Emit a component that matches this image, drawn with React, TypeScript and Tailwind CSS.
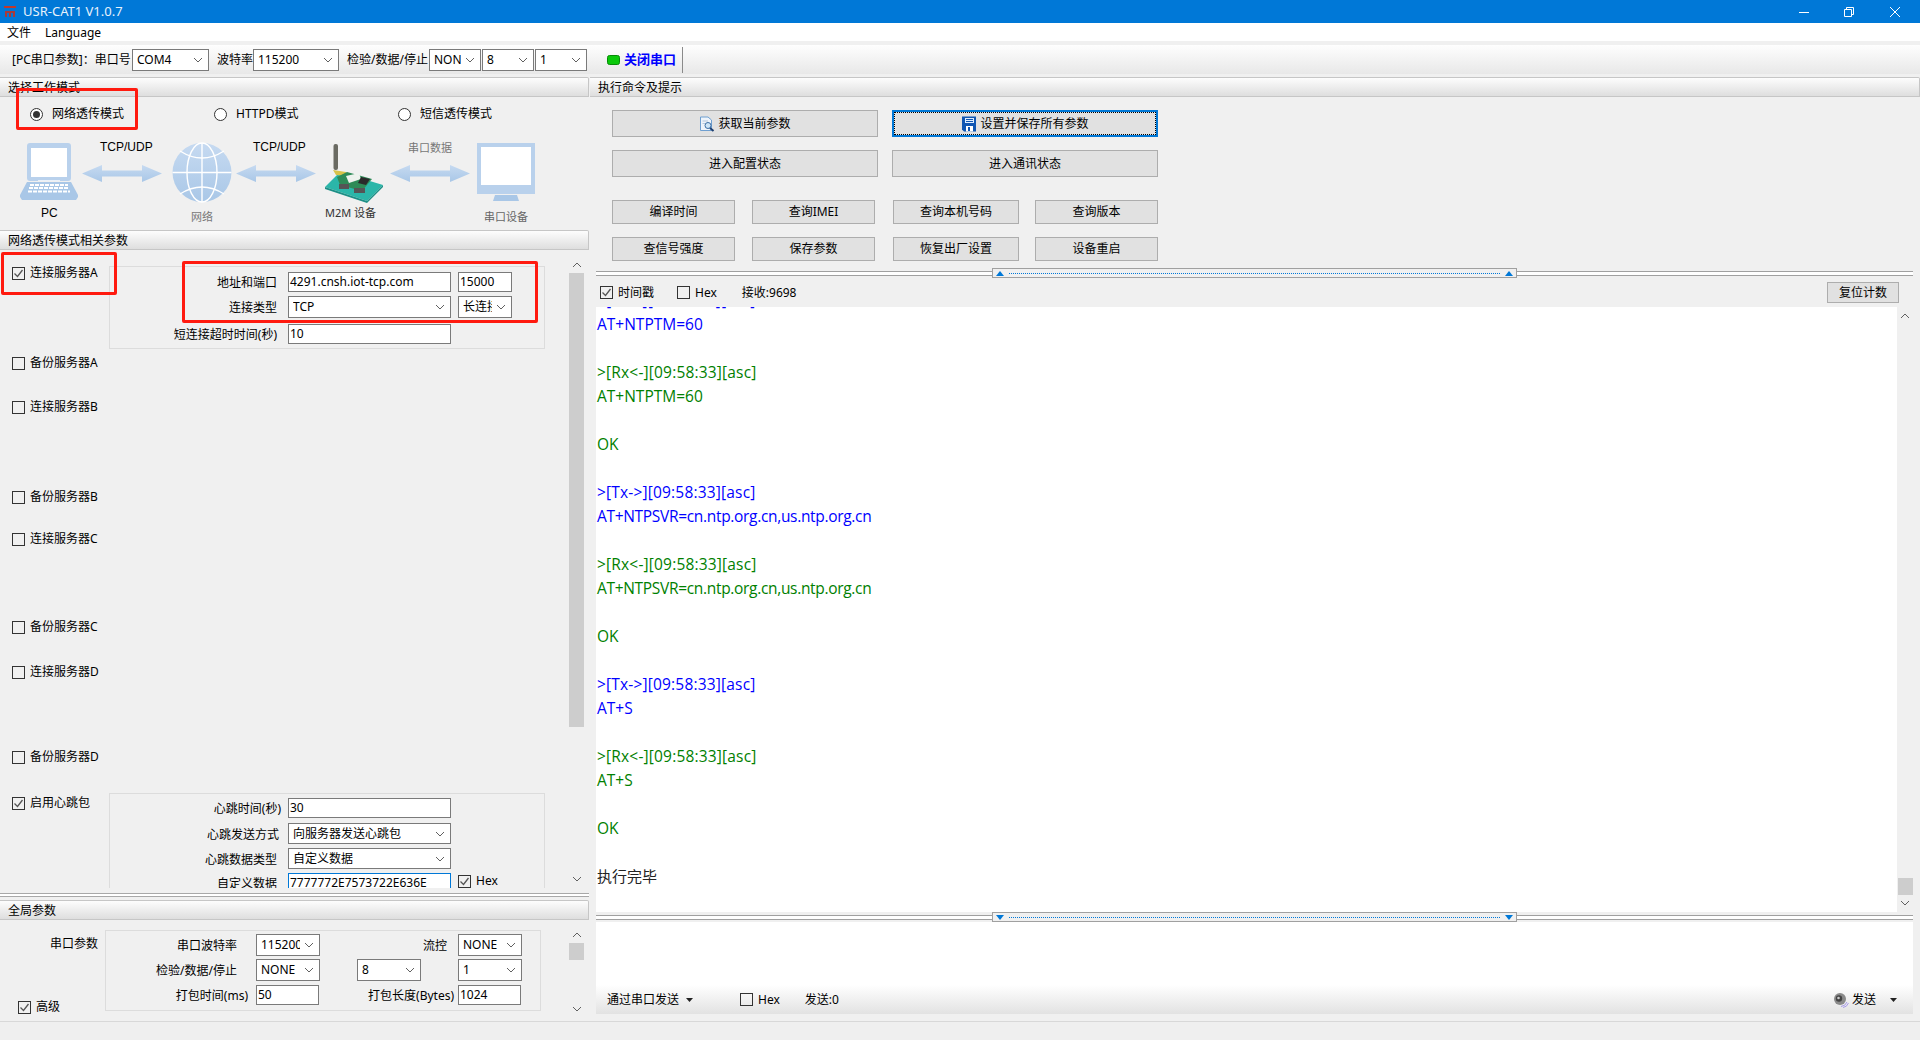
import React from "react";

const FONT = 'font-["Noto_Sans","Noto_Sans_CJK_SC",sans-serif]';

function Chevron({ up = false, className = "" }: { up?: boolean; className?: string }) {
  return (
    <svg width="10" height="6" viewBox="0 0 10 6" className={className}>
      <path d={up ? "M1 5 L5 1 L9 5" : "M1 1 L5 5 L9 1"} fill="none" stroke="#606060" strokeWidth="1" />
    </svg>
  );
}

function Sel({ w, h, children }: { w: string; h: string; children: React.ReactNode }) {
  return (
    <div className={`${w} ${h} shrink-0 flex items-center border border-[#7a7a7a] bg-white pl-[4px] pr-[5px] text-[12px] text-black`}>
      <span className="flex-1 overflow-hidden whitespace-nowrap">{children}</span>
      <Chevron className="ml-[4px] shrink-0" />
    </div>
  );
}

function Inp({ w, h, children, focus = false }: { w: string; h: string; children: React.ReactNode; focus?: boolean }) {
  return (
    <div className={`${w} ${h} shrink-0 flex items-center border ${focus ? "border-[#0078d7]" : "border-[#7a7a7a]"} bg-white pl-[1px] text-[12px] text-black whitespace-nowrap overflow-hidden`}>
      {children}
    </div>
  );
}

function Cb({ label, checked = false, className = "" }: { label?: string; checked?: boolean; className?: string }) {
  return (
    <div className={`flex items-center h-[14px] text-[12px] text-black whitespace-nowrap ${className}`}>
      <span className="w-[13px] h-[13px] shrink-0 border border-[#333] bg-transparent flex items-center justify-center">
        {checked && (
          <svg width="11" height="11" viewBox="0 0 11 11">
            <path d="M1.5 5.5 L4.5 8.5 L9.5 2" fill="none" stroke="#555" strokeWidth="1.3" />
          </svg>
        )}
      </span>
      {label && <span className="ml-[5px]">{label}</span>}
    </div>
  );
}

function SectionHead({ children }: { children: React.ReactNode }) {
  return (
    <div className="h-[20px] shrink-0 flex items-center pl-[8px] pt-[1px] text-[12px] text-black border-y border-r border-[#c6c6c6] rounded-tr-[2px] bg-gradient-to-b from-[#fdfdfd] to-[#dedede]">
      {children}
    </div>
  );
}

function Btn({ w, h, children, focus = false }: { w: string; h: string; children: React.ReactNode; focus?: boolean }) {
  return (
    <div className={`${w} ${h} shrink-0 flex items-center justify-center text-[12px] text-black bg-[#e1e1e1] ${focus ? "border-2 border-[#0078d7]" : "border border-[#adadad]"}`}>
      {focus ? (
        <div className="w-full h-full border border-dotted border-black flex items-center justify-center">{children}</div>
      ) : (
        children
      )}
    </div>
  );
}

function Lab({ w, children }: { w: string; children: React.ReactNode }) {
  return <div className={`${w} shrink-0 text-right text-[12px] text-black whitespace-nowrap pt-[2px]`}>{children}</div>;
}

function Split({ down = false }: { down?: boolean }) {
  const lines = (
    <div className="flex-1 h-[5px] border-y border-[#a0a0a0] bg-white" />
  );
  const tri = (
    <svg width="8" height="5" viewBox="0 0 8 5" className="shrink-0">
      <path d={down ? "M0 0 H8 L4 5 Z" : "M0 5 H8 L4 0 Z"} fill="#0078d7" />
    </svg>
  );
  return (
    <div className="h-[10px] shrink-0 flex items-center">
      {lines}
      <div className="w-[525px] h-[10px] shrink-0 flex items-center border border-[#a0a0a0] bg-[#f0f0f0] px-[3px] gap-[5px]">
        {tri}
        <div className="flex-1 border-t border-dotted border-[#0078d7]" />
        {tri}
      </div>
      {lines}
    </div>
  );
}

function Arrow({ x }: { x: number }) {
  const y = 38.5;
  const p = `${x},${y} ${x + 20},${y - 8.5} ${x + 20},${y - 3} ${x + 60},${y - 3} ${x + 60},${y - 8.5} ${x + 80},${y} ${x + 60},${y + 8.5} ${x + 60},${y + 3} ${x + 20},${y + 3} ${x + 20},${y + 8.5}`;
  return <polygon points={p} fill="url(#dg)" />;
}

function Diagram() {
  return (
    <svg width="590" height="95" viewBox="0 0 590 95" className="block">
      <defs>
        <linearGradient id="dg" x1="0" y1="0" x2="0" y2="1">
          <stop offset="0" stopColor="#c6daf1" />
          <stop offset="1" stopColor="#a9c7e7" />
        </linearGradient>
      </defs>
      {/* laptop */}
      <rect x="27" y="8" width="44" height="38" rx="3" fill="#b9d1ec" />
      <rect x="31" y="13" width="36" height="29" fill="#ffffff" />
      <path d="M27 47 H71 L78 60 V62 L76 65 H22 L20 62 V60 Z" fill="#a9c7e7" />
      <path d="M30 50 H68 M29 53 H69 M28 56.5 H70" stroke="#fff" strokeWidth="2" strokeDasharray="4 1" />
      <path d="M38 45.5 H60" stroke="#fff" strokeWidth="0.7" />
      <Arrow x={82} />
      {/* globe */}
      <circle cx="202" cy="37.5" r="29.5" fill="url(#dg)" />
      <g fill="none" stroke="#fff" strokeWidth="1.4">
        <ellipse cx="202" cy="37.5" rx="15" ry="29.5" />
        <path d="M202 8 V67 M172.5 37.5 H231.5" />
        <path d="M180 16 Q202 30 224 16" />
        <path d="M180 59 Q202 45 224 59" />
      </g>
      <Arrow x={236} />
      {/* module */}
      <polygon points="325,52 340,37 383,50 367,66" fill="#2bb6a9" />
      <polygon points="325,52 367,66 367,68 325,54" fill="#1d8f86" />
      <polygon points="367,66 383,50 383,52 367,68" fill="#1d8f86" />
      <rect x="333.5" y="9" width="4.5" height="26" rx="2" fill="#6a6a62" />
      <polygon points="333,35 346,37 348,41 336,40" fill="#d7c24a" />
      <polygon points="337,42 347,37 372,44 362,56 340,50" fill="#2e8b57" />
      <polygon points="346,41 359,38 361,44 349,48" fill="#eef2ee" />
      <polygon points="361,42 370,44 366,50 358,48" fill="#2a2a2a" />
      <rect x="339" y="49" width="10" height="5" fill="#555" />
      <rect x="354" y="53" width="11" height="5" fill="#555" />
      <Arrow x={390} />
      {/* monitor */}
      <rect x="477" y="8" width="58" height="51" fill="#b9d1ec" />
      <rect x="481" y="12" width="50" height="38" fill="#ffffff" />
      <polygon points="495,60 517,60 519,66 493,66" fill="#a9c7e7" />
    </svg>
  );
}

function DiagLabel({ pos, children }: { pos: string; children: React.ReactNode }) {
  return <span className={`absolute ${pos} text-[12px] leading-[14px] whitespace-nowrap`}>{children}</span>;
}

function ScrollBar({ top, thumb, bottom }: { top: string; thumb: string; bottom: string }) {
  return (
    <div className="w-[15px] shrink-0 flex flex-col items-center self-stretch">
      <Chevron up className={top} />
      <div className={thumb} />
      <div className="flex-1" />
      <Chevron className={bottom} />
    </div>
  );
}

const TX = "text-[#0000ff]";
const RX = "text-[#008000]";
const TXH = "text-[#0000ff] tracking-[0.18px]";
const RXH = "text-[#008000] tracking-[0.18px]";
const TXS = "text-[#0000ff] tracking-[-0.32px]";
const RXS = "text-[#008000] tracking-[-0.32px]";

const LOG: [string, string][] = [
  [">[Tx->][09:58:33][asc]", TXH],
  ["AT+NTPTM=60", TX],
  ["", ""],
  [">[Rx<-][09:58:33][asc]", RXH],
  ["AT+NTPTM=60", RX],
  ["", ""],
  ["OK", RX],
  ["", ""],
  [">[Tx->][09:58:33][asc]", TXH],
  ["AT+NTPSVR=cn.ntp.org.cn,us.ntp.org.cn", TXS],
  ["", ""],
  [">[Rx<-][09:58:33][asc]", RXH],
  ["AT+NTPSVR=cn.ntp.org.cn,us.ntp.org.cn", RXS],
  ["", ""],
  ["OK", RX],
  ["", ""],
  [">[Tx->][09:58:33][asc]", TXH],
  ["AT+S", TX],
  ["", ""],
  [">[Rx<-][09:58:33][asc]", RXH],
  ["AT+S", RX],
  ["", ""],
  ["OK", RX],
  ["", ""],
  ["执行完毕", "text-[#222] text-[15px]"],
];

export default function App() {
  return (
    <div className={`relative w-[1920px] h-[1040px] overflow-hidden flex flex-col bg-[#f0f0f0] ${FONT}`}>
      {/* title bar */}
      <div className="h-[23px] shrink-0 bg-[#0078d7] flex items-center text-white pl-[4px]">
        <svg width="12" height="13" viewBox="0 0 12 13" className="shrink-0">
          <path d="M0 1 H12 V3 H0 Z" fill="#c0392b" />
          <path d="M1 6 H11 V8 H1 Z M1 8 V12 H3 V8 Z M5 8 V12 H7 V8 Z M9 8 V12 H11 V8 Z" fill="#a83a3a" />
        </svg>
        <span className="ml-[7px] pt-[1px] text-[13px] text-[#e8f2fb]">USR-CAT1 V1.0.7</span>
        <div className="ml-auto flex items-center">
          <svg width="12" height="12" viewBox="0 0 12 12"><path d="M1 6.5 H11" stroke="#fff" /></svg>
          <svg width="12" height="12" viewBox="0 0 12 12" className="ml-[33px]">
            <path d="M1.5 3.5 H8.5 V10.5 H1.5 Z M3.5 3.5 V1.5 H10.5 V8.5 H8.5" fill="none" stroke="#fff" />
          </svg>
          <svg width="12" height="12" viewBox="0 0 12 12" className="ml-[34px] mr-[19px]">
            <path d="M1 1 L11 11 M11 1 L1 11" stroke="#fff" />
          </svg>
        </div>
      </div>
      {/* menu */}
      <div className="h-[18px] shrink-0 bg-white flex items-center pl-[7px] pt-[1px] gap-[14px] text-[12px] text-black">
        <span>文件</span>
        <span>Language</span>
      </div>
      {/* toolbar */}
      <div className="mt-[4px] h-[29px] shrink-0 flex items-center pl-[12px] text-[12px] text-black bg-gradient-to-b from-[#fefefe] to-[#e8e8e8] whitespace-nowrap">
        <span className="w-[120px]">[PC串口参数]：串口号</span>
        <Sel w="w-[77px]" h="h-[22px]">COM4</Sel>
        <span className="ml-[8px] w-[36px]">波特率</span>
        <Sel w="w-[86px]" h="h-[22px]">115200</Sel>
        <span className="ml-[8px] w-[82px]">检验/数据/停止</span>
        <Sel w="w-[52px]" h="h-[22px]">NONE</Sel>
        <div className="ml-[1px]"><Sel w="w-[52px]" h="h-[22px]">8</Sel></div>
        <div className="ml-[1px]"><Sel w="w-[52px]" h="h-[22px]">1</Sel></div>
        <svg width="13" height="10" viewBox="0 0 13 10" className="ml-[20px] shrink-0">
          <rect x="0.5" y="0.5" width="12" height="9" rx="2" fill="#0ac90a" stroke="#078a07" />
        </svg>
        <span className="ml-[4px] text-[13px] font-bold text-[#0000ff]">关闭串口</span>
        <div className="ml-[6px] w-[1px] h-[26px] bg-[#8a8a8a]" />
      </div>

      <div className="flex flex-1 min-h-0 pt-[3px]">
        {/* LEFT */}
        <div className="w-[590px] shrink-0 flex flex-col pr-[1px]">
          <SectionHead>选择工作模式</SectionHead>
          <div className="h-[133px] shrink-0 flex flex-col">
            <div className="pt-[10px] pl-[30px] flex h-[38px] shrink-0">
              {["网络透传模式", "HTTPD模式", "短信透传模式"].map((t, i) => (
                <div key={t} className="w-[184px] flex items-center h-[14px] text-[12px] text-black">
                  <span className="w-[13px] h-[13px] rounded-full border border-[#333] bg-white flex items-center justify-center">
                    {i === 0 && <span className="w-[7px] h-[7px] rounded-full bg-[#333]" />}
                  </span>
                  <span className="ml-[9px]">{t}</span>
                </div>
              ))}
            </div>
            <div className="relative">
              <Diagram />
              <DiagLabel pos="left-[100px] top-[5px] text-black font-['Liberation_Sans']">TCP/UDP</DiagLabel>
              <DiagLabel pos="left-[253px] top-[5px] text-black font-['Liberation_Sans']">TCP/UDP</DiagLabel>
              <DiagLabel pos="left-[408px] top-[6px] !text-[11px] text-[#777]">串口数据</DiagLabel>
              <DiagLabel pos="left-[41px] top-[71px] text-black font-['Liberation_Sans']">PC</DiagLabel>
              <DiagLabel pos="left-[191px] top-[75px] !text-[11px] text-[#777]">网络</DiagLabel>
              <DiagLabel pos="left-[325px] top-[71px] !text-[11px] text-[#333]">M2M 设备</DiagLabel>
              <DiagLabel pos="left-[484px] top-[75px] !text-[11px] text-[#666]">串口设备</DiagLabel>
            </div>
          </div>
          <SectionHead>网络透传模式相关参数</SectionHead>
          {/* params scroll */}
          <div className="h-[638px] shrink-0 flex overflow-hidden">
            <div className="w-[569px] shrink-0 pt-[16px]">
              <div className="flex">
                <div className="w-[109px] shrink-0 pl-[12px]">
                  <Cb label="连接服务器A" checked />
                </div>
                <div className="w-[436px] h-[83px] shrink-0 border border-[#dcdcdc] pt-[5px] flex flex-col">
                  <div className="flex items-center h-[20px]">
                    <Lab w="w-[167px] mr-[11px]">地址和端口</Lab>
                    <Inp w="w-[163px]" h="h-[20px]">4291.cnsh.iot-tcp.com</Inp>
                    <div className="ml-[7px]"><Inp w="w-[54px]" h="h-[20px]">15000</Inp></div>
                  </div>
                  <div className="mt-[4px] flex items-center h-[22px]">
                    <Lab w="w-[167px] mr-[11px]">连接类型</Lab>
                    <Sel w="w-[163px]" h="h-[22px]">TCP</Sel>
                    <div className="ml-[7px]"><Sel w="w-[54px]" h="h-[22px]">长连接</Sel></div>
                  </div>
                  <div className="mt-[6px] flex items-center h-[20px]">
                    <Lab w="w-[167px] mr-[11px]">短连接超时时间(秒)</Lab>
                    <Inp w="w-[163px]" h="h-[20px]">10</Inp>
                  </div>
                </div>
              </div>
              <div className="pl-[12px]">
                <Cb label="备份服务器A" className="mt-[7px]" />
                <Cb label="连接服务器B" className="mt-[30px]" />
                <Cb label="备份服务器B" className="mt-[76px]" />
                <Cb label="连接服务器C" className="mt-[28px]" />
                <Cb label="备份服务器C" className="mt-[74px]" />
                <Cb label="连接服务器D" className="mt-[31px]" />
                <Cb label="备份服务器D" className="mt-[71px]" />
              </div>
              <div className="flex mt-[29px]">
                <div className="w-[109px] shrink-0 pl-[12px] pt-[3px]">
                  <Cb label="启用心跳包" checked />
                </div>
                <div className="w-[436px] h-[120px] shrink-0 border border-[#dcdcdc] pt-[4px] flex flex-col">
                  <div className="flex items-center h-[20px]">
                    <Lab w="w-[171px] mr-[7px]">心跳时间(秒)</Lab>
                    <Inp w="w-[163px]" h="h-[20px]">30</Inp>
                  </div>
                  <div className="mt-[5px] flex items-center h-[21px]">
                    <Lab w="w-[169px] mr-[9px]">心跳发送方式</Lab>
                    <Sel w="w-[163px]" h="h-[21px]">向服务器发送心跳包</Sel>
                  </div>
                  <div className="mt-[4px] flex items-center h-[21px]">
                    <Lab w="w-[167px] mr-[11px]">心跳数据类型</Lab>
                    <Sel w="w-[163px]" h="h-[21px]">自定义数据</Sel>
                  </div>
                  <div className="mt-[4px] flex items-center h-[20px]">
                    <Lab w="w-[167px] mr-[11px]">自定义数据</Lab>
                    <Inp w="w-[163px]" h="h-[20px]" focus>7777772E7573722E636E</Inp>
                    <Cb label="Hex" checked className="ml-[7px] -mt-[4px]" />
                  </div>
                </div>
              </div>
            </div>
            <ScrollBar top="mt-[12px]" thumb="mt-[5px] w-[15px] h-[454px] bg-[#cdcdcd]" bottom="mb-[6px]" />
          </div>
          <div className="mt-[5px] h-[4px] shrink-0 border-y border-[#a8a8a8] bg-white" />
          <div className="mt-[3px]"><SectionHead>全局参数</SectionHead></div>
          {/* global */}
          <div className="h-[91px] mt-[7px] flex shrink-0">
            <div className="w-[569px] shrink-0 flex pt-[3px]">
              <div className="w-[105px] h-[84px] shrink-0 flex flex-col justify-between">
                <div className="pl-[50px] pt-[7px] text-[12px] text-black leading-[14px]">串口参数</div>
                <Cb label="高级" checked className="ml-[18px]" />
              </div>
              <div className="w-[436px] h-[81px] shrink-0 border border-[#dcdcdc] pt-[3px] flex flex-col">
                <div className="flex items-center h-[22px]">
                  <Lab w="w-[131px] mr-[19px]">串口波特率</Lab>
                  <Sel w="w-[64px]" h="h-[22px]">115200</Sel>
                  <Lab w="w-[127px] mr-[11px]">流控</Lab>
                  <Sel w="w-[64px]" h="h-[22px]">NONE</Sel>
                </div>
                <div className="mt-[3px] flex items-center h-[22px]">
                  <Lab w="w-[131px] mr-[19px]">检验/数据/停止</Lab>
                  <Sel w="w-[64px]" h="h-[22px]">NONE</Sel>
                  <div className="ml-[37px]"><Sel w="w-[64px]" h="h-[22px]">8</Sel></div>
                  <div className="ml-[37px]"><Sel w="w-[64px]" h="h-[22px]">1</Sel></div>
                </div>
                <div className="mt-[4px] flex items-center h-[20px]">
                  <Lab w="w-[142px] mr-[8px]">打包时间(ms)</Lab>
                  <Inp w="w-[63px]" h="h-[20px]">50</Inp>
                  <Lab w="w-[135px] mr-[4px]">打包长度(Bytes)</Lab>
                  <Inp w="w-[63px]" h="h-[20px]">1024</Inp>
                </div>
              </div>
            </div>
            <ScrollBar top="mt-[5px]" thumb="mt-[5px] w-[15px] h-[17px] bg-[#cdcdcd]" bottom="mb-[6px]" />
          </div>
        </div>

        {/* RIGHT */}
        <div className="flex-1 min-w-0 flex flex-col">
          <SectionHead>执行命令及提示</SectionHead>
          <div className="pl-[22px] h-[164px] shrink-0 flex flex-col">
            <div className="mt-[13px] flex gap-[14px]">
              <Btn w="w-[266px]" h="h-[27px]">
                <svg width="16" height="16" viewBox="0 0 16 16" className="mr-[3px]">
                  <path d="M1.5 1 H9 L12.5 4 V14.5 H1.5 Z" fill="#eef4fb" stroke="#6f9fd0" />
                  <path d="M3.5 5 H9 M3.5 7.5 H6" stroke="#b6c8dc" />
                  <circle cx="9" cy="9.5" r="3" fill="#cfe6f7" stroke="#3b6ea5" />
                  <path d="M11 12 L14.5 15" stroke="#1d3f70" strokeWidth="2" />
                </svg>
                获取当前参数
              </Btn>
              <Btn w="w-[266px]" h="h-[27px]" focus>
                <svg width="16" height="16" viewBox="0 0 16 16" className="mr-[3px]">
                  <path d="M1 0.5 H15 V15.5 H3 L1 13.5 Z" fill="#0f56b3" />
                  <path d="M4 2 H13 V7 H4 Z" fill="#dcecff" />
                  <path d="M5 3.5 H12 M5 5.5 H12" stroke="#0f56b3" />
                  <path d="M5 10 H12 V15.5 H5 Z" fill="#ffffff" />
                  <path d="M7 11 H9 V15 H7 Z" fill="#0f56b3" />
                </svg>
                设置并保存所有参数
              </Btn>
            </div>
            <div className="mt-[13px] flex gap-[14px]">
              <Btn w="w-[266px]" h="h-[27px]">进入配置状态</Btn>
              <Btn w="w-[266px]" h="h-[27px]">进入通讯状态</Btn>
            </div>
            <div className="mt-[23px] flex h-[24px]">
              <Btn w="w-[123px]" h="h-[24px]">编译时间</Btn>
              <div className="ml-[17px]"><Btn w="w-[123px]" h="h-[24px]">查询IMEI</Btn></div>
              <div className="ml-[18px]"><Btn w="w-[126px]" h="h-[24px]">查询本机号码</Btn></div>
              <div className="ml-[16px]"><Btn w="w-[123px]" h="h-[24px]">查询版本</Btn></div>
            </div>
            <div className="mt-[13px] flex h-[24px]">
              <Btn w="w-[123px]" h="h-[24px]">查信号强度</Btn>
              <div className="ml-[17px]"><Btn w="w-[123px]" h="h-[24px]">保存参数</Btn></div>
              <div className="ml-[18px]"><Btn w="w-[126px]" h="h-[24px]">恢复出厂设置</Btn></div>
              <div className="ml-[16px]"><Btn w="w-[123px]" h="h-[24px]">设备重启</Btn></div>
            </div>
          </div>
          <div className="flex-1 min-h-0 flex flex-col pl-[6px] pr-[7px] mt-[7px]">
            <Split />
            <div className="h-[29px] shrink-0 flex items-center pl-[4px] text-[12px] text-black">
              <Cb label="时间戳" checked />
              <Cb label="Hex" className="ml-[23px]" />
              <span className="ml-[25px]">接收:9698</span>
              <div className="ml-auto mr-[14px]"><Btn w="w-[72px]" h="h-[21px]">复位计数</Btn></div>
            </div>
            <div className="h-[605px] shrink-0 flex">
              <div className="flex-1 min-w-0 bg-white overflow-hidden pl-[1px]">
                <div className="-mt-[19px] font-['Open_Sans','Noto_Sans_CJK_SC',sans-serif] text-[15.5px]">
                  {LOG.map(([t, c], i) => (
                    <div key={i} className={`h-[24px] leading-[24px] whitespace-nowrap ${c}`}>{t}</div>
                  ))}
                </div>
              </div>
              <div className="w-[16px] shrink-0 flex flex-col items-center">
                <Chevron up className="mt-[6px]" />
                <div className="flex-1" />
                <div className="w-[15px] h-[17px] bg-[#cdcdcd]" />
                <Chevron className="mt-[5px] mb-[6px]" />
              </div>
            </div>
            <Split down />
            <div className="h-[63px] shrink-0 bg-white" />
            <div className="h-[29px] shrink-0 flex items-center pl-[11px] pr-[16px] text-[12px] text-black bg-gradient-to-b from-white to-[#e2e2e2]">
              <span>通过串口发送</span>
              <svg width="7" height="4" viewBox="0 0 7 4" className="ml-[7px]"><path d="M0 0 H7 L3.5 4 Z" fill="#222" /></svg>
              <Cb label="Hex" className="ml-[47px]" />
              <span className="ml-[25px]">发送:0</span>
              <svg width="16" height="16" viewBox="0 0 16 16" className="ml-auto">
                <circle cx="7" cy="7" r="6" fill="#8a8a8a" />
                <circle cx="6" cy="6.5" r="3.2" fill="#444" />
                <circle cx="5.5" cy="6" r="1.3" fill="#ccc" />
                <path d="M8 14.5 Q12.5 14 14 10 M10 15.5 Q14 15 15.5 11" fill="none" stroke="#a79be8" />
              </svg>
              <span className="ml-[3px]">发送</span>
              <svg width="7" height="4" viewBox="0 0 7 4" className="ml-[14px]"><path d="M0 0 H7 L3.5 4 Z" fill="#222" /></svg>
            </div>
          </div>
        </div>
      </div>
      {/* status */}
      <div className="h-[19px] shrink-0 border-t border-[#d8d8d8] bg-[#efefef]" />

      {/* red annotation frames */}
      <div className="absolute left-[16px] top-[88px] w-[122px] h-[42px] border-[3px] border-[#ff1a0f] rounded-[2px]" />
      <div className="absolute left-[1px] top-[252px] w-[116px] h-[43px] border-[3px] border-[#ff1a0f] rounded-[2px]" />
      <div className="absolute left-[182px] top-[261px] w-[356px] h-[62px] border-[3px] border-[#ff1a0f] rounded-[2px]" />
    </div>
  );
}
